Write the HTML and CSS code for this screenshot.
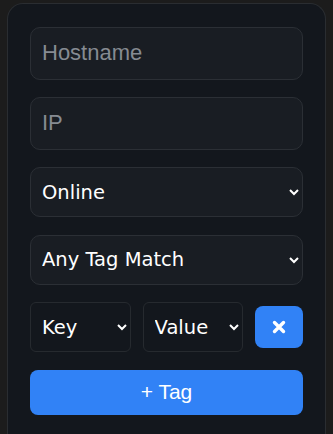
FILE: index.html
```html
<!DOCTYPE html>
<html lang="en">
<head>
    <meta charset="UTF-8">
    <meta name="viewport" content="width=device-width, initial-scale=1.0">
    <title>Filter</title>
    <link rel="stylesheet" href="styles.css">
</head>
<body>
    <div class="filter-panel">
        <input class="field" type="text" placeholder="Hostname">
        <input class="field" type="text" placeholder="IP">
        <select class="field field-select">
            <option>Online</option>
            <option>Offline</option>
            <option>Any</option>
        </select>
        <select class="field field-select">
            <option>Any Tag Match</option>
            <option>All Tags Match</option>
        </select>
        <div class="tag-row">
            <select class="tag-select">
                <option>Key</option>
            </select>
            <select class="tag-select">
                <option>Value</option>
            </select>
            <button class="remove-btn" type="button">
                <svg width="16" height="16" viewBox="0 0 16 16">
                    <path d="M3.5 3.5 L12.5 12.5 M12.5 3.5 L3.5 12.5" stroke="#fff" stroke-width="3.4" stroke-linecap="round"/>
                </svg>
            </button>
        </div>
        <button class="add-btn" type="button">+ Tag</button>
    </div>
</body>
</html>
```

FILE: styles.css
```css
html, body {
    margin: 0;
    padding: 0;
    background-color: #1c1c1c;
    height: 100%;
    overflow: hidden;
}
.filter-panel {
    box-sizing: border-box;
    width: 319px;
    height: 431px;
    margin: 3px 0 0 7px;
    padding: 23px 22px 0;
    background-color: #13171d;
    border: 1px solid #2a2d31;
    border-bottom: none;
    border-radius: 16px 16px 0 0;
    display: flex;
    flex-direction: column;
    gap: 17.5px;
    color-scheme: dark;
}
.field {
    box-sizing: border-box;
    flex-shrink: 0;
    width: 100%;
    height: 52.5px;
    padding: 0 11px;
    background-color: #191d23;
    border: 1px solid #2b2f35;
    border-radius: 10px;
    color: #ffffff;
    font-family: "Liberation Sans", Arial, sans-serif;
    font-size: 22px;
    outline: none;
}
.field::placeholder {
    color: #868b92;
}
.field-select {
    height: 50px;
    padding: 0 7px;
    font-family: "DejaVu Sans", sans-serif;
    font-size: 19.5px;
}
.tag-row {
    flex-shrink: 0;
    display: flex;
    align-items: center;
    gap: 12px;
}
.tag-select {
    box-sizing: border-box;
    width: 101px;
    height: 50px;
    padding: 0 7px;
    background-color: #13171d;
    border: 1px solid #262a2f;
    border-radius: 6px;
    color: #ffffff;
    font-family: "DejaVu Sans", sans-serif;
    font-size: 19.5px;
    outline: none;
}
.remove-btn {
    width: 48px;
    height: 42px;
    border: none;
    border-radius: 8px;
    background-color: #3182f6;
    display: flex;
    align-items: center;
    justify-content: center;
    cursor: pointer;
}
.add-btn {
    flex-shrink: 0;
    width: 100%;
    height: 45px;
    border: none;
    border-radius: 8px;
    background-color: #3182f6;
    color: #ffffff;
    font-family: "Liberation Sans", Arial, sans-serif;
    font-size: 21px;
    cursor: pointer;
}
```
